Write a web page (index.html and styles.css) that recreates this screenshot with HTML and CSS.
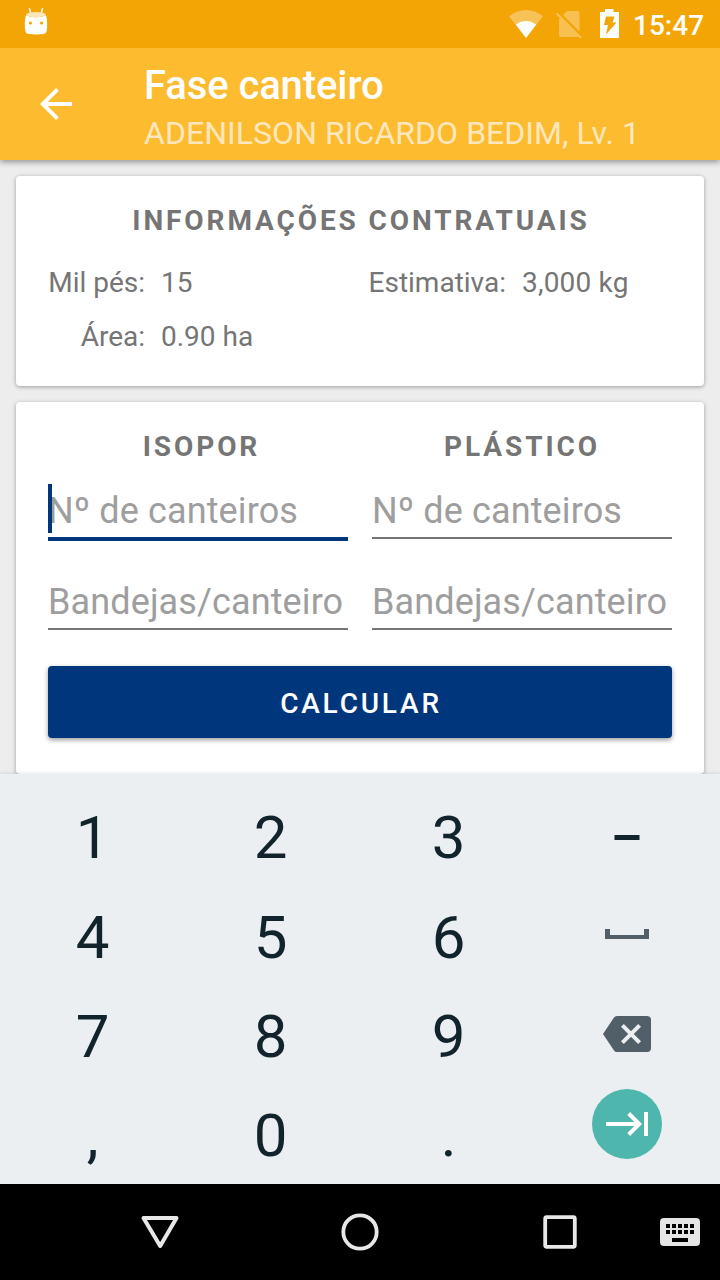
FILE: index.html
```html
<!DOCTYPE html>
<html lang="pt-BR">
<head>
<meta charset="utf-8">
<title>Fase canteiro</title>
<link rel="stylesheet" href="styles.css">
</head>
<body>
<div class="screen">
  <div class="status-bar">
    <svg class="status-robot" width="28" height="32" viewBox="0 0 28 32">
      <path d="M7.500 1.500l1.200 5M20.500 1.500l-1.200 5" stroke="#fff" stroke-width="1.400" stroke-linecap="round"/>
      <path d="M4.500 8C3 9.500 2.700 15 2.900 20c.2 5 1 6.500 4 7.100 4 .6 10.200.6 14.200 0 3-.6 3.800-2.100 4-7.100.2-5-.1-10.500-1.600-12-2 3-17 3-19 0z" fill="#fff"/>
      <ellipse cx="14" cy="7.600" rx="9.600" ry="2.700" fill="#fce5b8"/>
      <circle cx="8.400" cy="16" r="1.600" fill="#f3a505"/><circle cx="19.600" cy="16" r="1.600" fill="#f3a505"/>
    </svg>
    <svg class="status-icons" width="112" height="32" viewBox="508 8 112 32">
      <path d="M509 16.200Q526 3.800 543 16.200L526 38z" fill="#f7c359"/>
      <path d="M515.800 24.400Q526 17.600 536.200 24.400L526 38z" fill="#fff"/>
      <path d="M567 11h10.500a2 2 0 0 1 2 2v22a2 2 0 0 1-2 2H561a2 2 0 0 1-2-2V19z" fill="#f7c050"/>
      <path d="M559 13l22 22" stroke="#f3a505" stroke-width="2.500"/>
      <path d="M556.700 13.500l24.300 24.500" stroke="#f7c050" stroke-width="2.200"/>
      <path d="M605 9h8.500v3h5.500v26h-19V12h5z" fill="#fff"/>
      <path d="M606 16.500h8.500l-2 6h4l-10.500 12 2-9.500h-4z" fill="#f3a505"/>
    </svg>
    <span class="clock">15:47</span>
  </div>
  <header class="app-bar">
    <svg class="back" width="32" height="32" viewBox="0 0 32 32"><path d="M32 14H7.700L18.900 2.800 16 0 0 16l16 16 2.800-2.800L7.700 18H32z" fill="#fff"/></svg>
    <div class="titles">
      <h1 class="title">Fase canteiro</h1>
      <div class="subtitle">ADENILSON RICARDO BEDIM, Lv. 1</div>
    </div>
  </header>
  <main class="content">
    <section class="card contract">
      <h2 class="heading">INFORMAÇÕES CONTRATUAIS</h2>
      <div class="facts">
        <span class="label">Mil pés:</span><span>15</span>
        <span class="label">Estimativa:</span><span class="estimate">3,000 kg</span>
        <span class="label">Área:</span><span>0.90 ha</span>
      </div>
    </section>
    <section class="card form">
      <div class="fields">
        <h2 class="heading heading-left">ISOPOR</h2>
        <h2 class="heading">PLÁSTICO</h2>
        <div class="field focused">Nº de canteiros<i class="caret"></i></div>
        <div class="field">Nº de canteiros</div>
        <div class="field">Bandejas/canteiro</div>
        <div class="field">Bandejas/canteiro</div>
      </div>
      <div class="button">CALCULAR</div>
    </section>
  </main>
  <div class="keyboard">
    <div class="key">1</div><div class="key">2</div><div class="key">3</div>
    <div class="key key-minus"><svg width="26" height="5"><rect x=".5" width="25" height="5" fill="#11242c"/></svg></div>
    <div class="key">4</div><div class="key">5</div><div class="key">6</div>
    <div class="key key-space"><svg width="44" height="10"><path d="M0 0h5v6h34V0h5v10H0z" fill="#505f68"/></svg></div>
    <div class="key">7</div><div class="key">8</div><div class="key">9</div>
    <div class="key key-delete"><svg width="48" height="36" viewBox="0 0 48 36"><path d="M14 0h30a4 4 0 0 1 4 4v28a4 4 0 0 1-4 4H14q-2 0-3-1.500L0 18 11 1.500Q12 0 14 0z" fill="#505f68"/><path d="M19.400 9.400l17.200 17.200M36.600 9.400L19.400 26.600" stroke="#ebeff2" stroke-width="4"/></svg></div>
    <div class="key">,</div><div class="key">0</div><div class="key">.</div>
    <div class="key key-next"><svg width="70" height="70" viewBox="0 0 70 70"><circle cx="35" cy="35" r="35" fill="#4eb6ac"/><path d="M14 35h33M36.700 24.500L47.200 35 36.700 45.500M54 23v24" fill="none" stroke="#fff" stroke-width="4"/></svg></div>
  </div>
  <nav class="nav-bar">
    <svg class="nav-icons" width="720" height="96" viewBox="0 0 720 96" fill="none" stroke="#e8e8e8">
      <path d="M143.500 34h33L160.200 62z" stroke-width="4" stroke-linejoin="round"/>
      <circle cx="360" cy="48" r="16.700" stroke-width="3.800"/>
      <rect x="545.200" y="33.200" width="29.600" height="29.600" rx="1.500" stroke-width="3.800"/>
      <rect x="660" y="34" width="40" height="28" rx="4" fill="#e5e5e5" stroke="none"/>
      <path d="M666 42h28M666 48h28" stroke="#000" stroke-width="4" stroke-dasharray="4 2"/>
      <path d="M672 56h16" stroke="#000" stroke-width="4"/>
    </svg>
  </nav>
</div>
</body>
</html>
```
FILE: styles.css
```css
body {
  margin: 0;
  font-family: Roboto, "Liberation Sans", sans-serif;
}
.screen {
  display: flex;
  flex-direction: column;
  width: 720px;
  height: 1280px;
  overflow: hidden;
  background: #ededed;
}
.status-bar {
  position: relative;
  z-index: 1;
  display: flex;
  align-items: center;
  box-sizing: border-box;
  height: 48px;
  padding: 0 16px 0 22px;
  background: #f3a505;
}
.status-robot {
  margin-top: -2px;
}
.status-icons {
  margin-left: auto;
}
.clock {
  width: 71px;
  margin-left: 13px;
  padding-top: 3px;
  font-size: 28px;
  font-weight: 500;
  color: #fff;
}
.app-bar {
  display: flex;
  align-items: center;
  height: 112px;
  background: #fdbb2f;
  box-shadow: 0 2px 6px rgba(0, 0, 0, .4);
}
.back {
  margin: 0 72px 0 40px;
}
.titles {
  padding-top: 10px;
  white-space: nowrap;
  color: #fff;
}
.title {
  margin: 0;
  font-size: 40px;
  line-height: 48px;
  font-weight: 500;
  letter-spacing: -.1px;
}
.subtitle {
  font-size: 32px;
  line-height: 46px;
  letter-spacing: .04px;
  color: #fee7bd;
}
.content {
  display: flex;
  flex-direction: column;
  gap: 16px;
  height: 598px;
  padding: 16px 16px 0;
}
.card {
  box-sizing: border-box;
  padding: 26px 32px 0;
  border-radius: 4px;
  background: #fff;
  box-shadow: 0 1px 4px rgba(0, 0, 0, .35);
  color: #757575;
}
.contract {
  height: 210px;
}
.form {
  height: 372px;
}
.heading {
  margin: 0;
  font-size: 28px;
  line-height: 38px;
  font-weight: 700;
  letter-spacing: 2.900px;
  text-align: center;
}
.contract .heading {
  padding-left: 2px;
}
.heading-left {
  padding-left: 7px;
}
.facts {
  display: grid;
  grid-template-columns: 97px 191px 138px 1fr;
  column-gap: 16px;
  padding-top: 16px;
  font-size: 28px;
  line-height: 54px;
  white-space: nowrap;
}
.label {
  text-align: right;
}
.label + .estimate {
  letter-spacing: .2px;
}
.fields {
  display: grid;
  grid-template-columns: 300px 300px;
  column-gap: 24px;
}
.field {
  position: relative;
  height: 52px;
  margin: 19px 0 18px;
  border-bottom: 2px solid #757575;
  font-size: 36px;
  line-height: 52px;
  letter-spacing: .12px;
  white-space: nowrap;
  color: #9e9e9e;
}
.focused {
  margin-bottom: 16px;
  border-bottom: 4px solid #00367c;
}
.caret {
  position: absolute;
  top: -1px;
  left: 0;
  width: 4px;
  height: 49px;
  background: #00367c;
}
.button {
  box-sizing: border-box;
  height: 72px;
  margin-top: 18px;
  padding: 2px 0 0 2px;
  border-radius: 4px;
  background: #00367c;
  box-shadow: 0 2px 5px rgba(0, 0, 0, .4);
  font-size: 28px;
  line-height: 72px;
  font-weight: 500;
  letter-spacing: 2.800px;
  text-align: center;
  color: #fff;
}
.keyboard {
  position: relative;
  display: grid;
  grid-template-columns: repeat(4, 178.100px);
  grid-auto-rows: 99.400px;
  box-sizing: border-box;
  height: 410px;
  padding: 14.600px 3px 0 3.500px;
  background: #ebeff2;
  box-shadow: 0 0 4px rgba(0, 0, 0, .15);
}
.key {
  display: flex;
  align-items: center;
  justify-content: center;
  font-size: 60px;
  line-height: 1;
  color: #11242c;
}
.key-minus {
  padding-bottom: 2px;
}
.key-space {
  padding-bottom: 7px;
}
.key-delete {
  padding-bottom: 6px;
}
.key-next {
  padding-bottom: 25px;
}
.nav-bar {
  position: relative;
  height: 96px;
  background: #000;
}
.nav-icons {
  display: block;
}
```
